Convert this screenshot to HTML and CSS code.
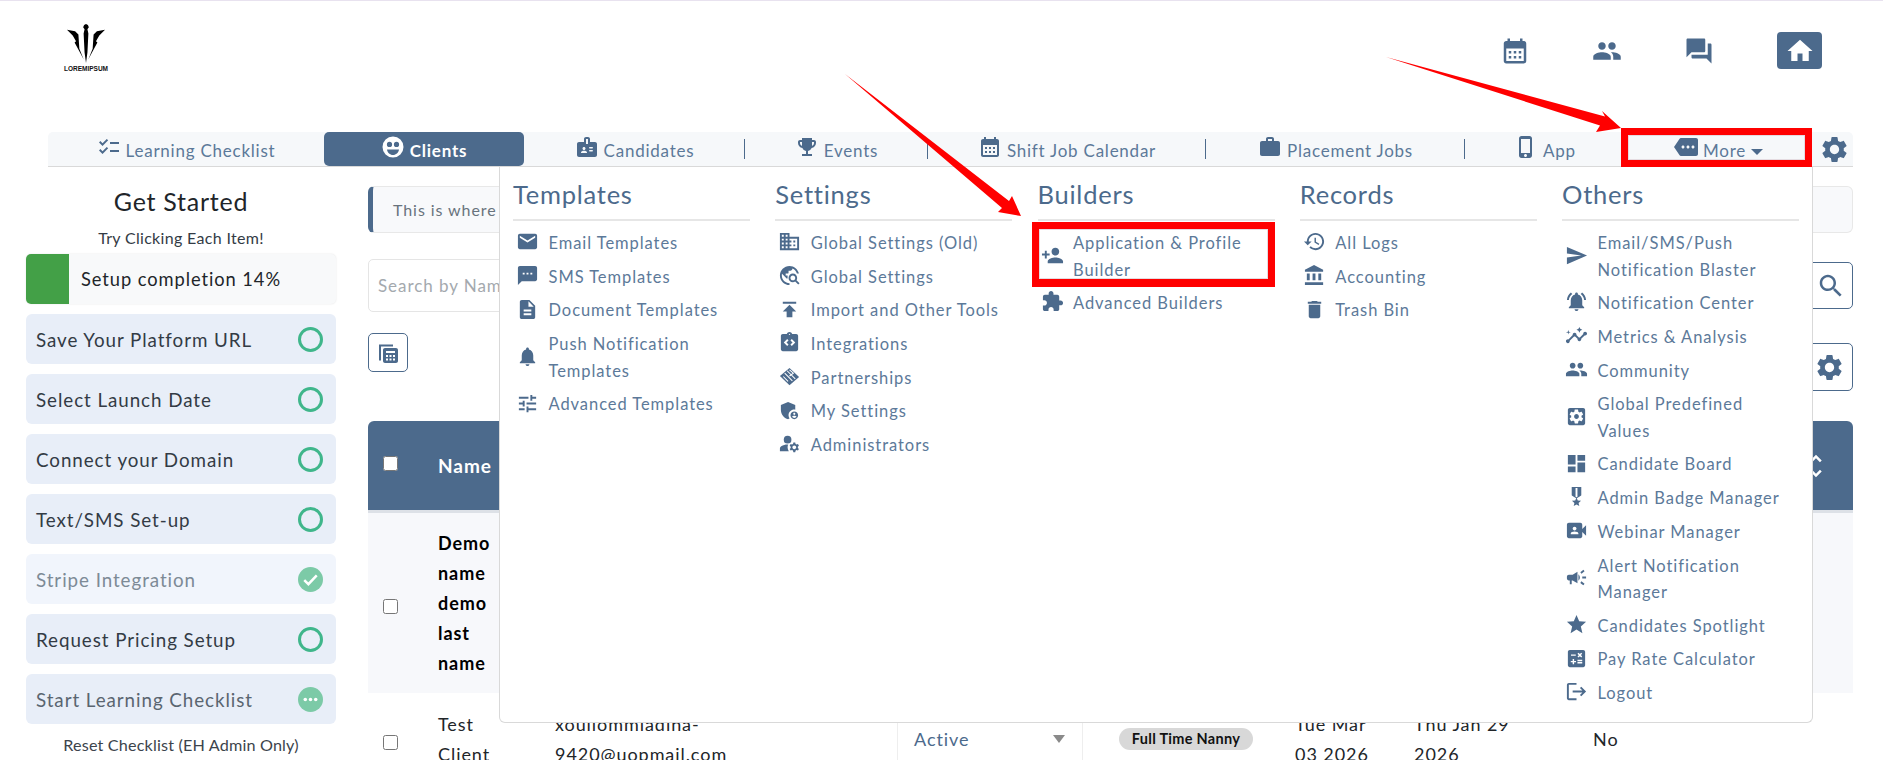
FILE: index.html
```html
<!DOCTYPE html>
<html lang="en">
<head>
<meta charset="utf-8">
<title>Clients</title>
<link rel="stylesheet" href="styles.css">
</head>
<body>
<svg class="sprite" width="0" height="0" aria-hidden="true">
<symbol id="i-checklist" viewBox="0 0 24 24"><path d="M22 7h-9v2h9V7zm0 8h-9v2h9v-2zM5.54 11 2 7.46l1.41-1.41 2.12 2.12 4.24-4.24 1.41 1.41L5.54 11zm0 8L2 15.46l1.41-1.41 2.12 2.12 4.24-4.24 1.41 1.41L5.54 19z"/></symbol>
<symbol id="i-face" viewBox="0 0 24 24"><path fill-rule="evenodd" d="M12 1.500a10.500 10.500 0 100 21 10.500 10.500 0 000-21zM8.500 6.800a2.600 2.600 0 110 5.200 2.600 2.600 0 010-5.200zm7 0a2.600 2.600 0 110 5.200 2.600 2.600 0 010-5.200zM12 20c-3 0-5.500-2.300-6-5.500h12c-.5 3.200-3 5.500-6 5.500z"/></symbol>
<symbol id="i-badge" viewBox="0 0 24 24"><path d="M20 7h-5V4c0-1.1-.9-2-2-2h-2c-1.1 0-2 .9-2 2v3H4c-1.1 0-2 .9-2 2v11c0 1.1.9 2 2 2h16c1.1 0 2-.9 2-2V9c0-1.1-.9-2-2-2zM9 12c.83 0 1.5.67 1.5 1.5S9.83 15 9 15s-1.5-.67-1.5-1.5S8.17 12 9 12zm3 6H6v-.43c0-.6.36-1.15.92-1.39.64-.28 1.34-.43 2.08-.43s1.44.15 2.08.43c.55.24.92.78.92 1.39V18zm1-9h-2V4h2v5zm4.25 7.5h-2.5c-.41 0-.75-.34-.75-.75s.34-.75.75-.75h2.5c.41 0 .75.34.75.75s-.34.75-.75.75zm0-3h-2.5c-.41 0-.75-.34-.75-.75s.34-.75.75-.75h2.5c.41 0 .75.34.75.75s-.34.75-.75.75z"/></symbol>
<symbol id="i-trophy" viewBox="0 0 24 24"><path d="M19 5h-2V3H7v2H5c-1.1 0-2 .9-2 2v1c0 2.55 1.92 4.63 4.39 4.94.63 1.5 1.98 2.63 3.61 2.96V19H7v2h10v-2h-4v-3.1c1.63-.33 2.98-1.46 3.61-2.96C19.08 12.63 21 10.55 21 8V7c0-1.1-.9-2-2-2zM5 8V7h2v3.82C5.84 10.4 5 9.3 5 8zm14 0c0 1.3-.84 2.4-2 2.82V7h2v1z"/></symbol>
<symbol id="i-calendar" viewBox="0 0 24 24"><path d="M19 4h-1V2h-2v2H8V2H6v2H5c-1.11 0-1.99.9-1.99 2L3 20c0 1.1.9 2 2 2h14c1.1 0 2-.9 2-2V6c0-1.1-.9-2-2-2zm0 16H5V10h14v10z"/><path d="M7 12h2v2H7zM11 12h2v2h-2zM15 12h2v2h-2zM7 16h2v2H7zM11 16h2v2h-2zM15 16h2v2h-2z"/></symbol>
<symbol id="i-work" viewBox="0 0 24 24"><path d="M20 6h-4V4c0-1.11-.89-2-2-2h-4c-1.11 0-2 .89-2 2v2H4c-1.11 0-1.99.89-1.99 2L2 19c0 1.11.89 2 2 2h16c1.11 0 2-.89 2-2V8c0-1.11-.89-2-2-2zm-6 0h-4V4h4v2z"/></symbol>
<symbol id="i-phone" viewBox="0 0 24 24"><path d="M15.5 1h-8C6.12 1 5 2.12 5 3.5v17C5 21.88 6.12 23 7.5 23h8c1.38 0 2.5-1.12 2.5-2.5v-17C18 2.12 16.88 1 15.5 1zm-4 21c-.83 0-1.5-.67-1.5-1.5s.67-1.5 1.5-1.5 1.5.67 1.5 1.5-.67 1.5-1.5 1.5zm4.5-4H7V4h9v14z"/></symbol>
<symbol id="i-more" viewBox="0 0 24 24"><path d="M22 3H7c-.69 0-1.23.35-1.59.88L0 12l5.41 8.11c.36.53.9.89 1.59.89h15c1.1 0 2-.9 2-2V5c0-1.1-.9-2-2-2zM9 13.5c-.83 0-1.5-.67-1.5-1.5s.67-1.5 1.5-1.5 1.5.67 1.5 1.5-.67 1.5-1.5 1.5zm5 0c-.83 0-1.5-.67-1.5-1.5s.67-1.5 1.5-1.5 1.5.67 1.5 1.5-.67 1.5-1.5 1.5zm5 0c-.83 0-1.5-.67-1.5-1.5s.67-1.5 1.5-1.5 1.5.67 1.5 1.5-.67 1.5-1.5 1.5z"/></symbol>
<symbol id="i-gear" viewBox="0 0 24 24"><path d="M19.14 12.94c.04-.3.06-.61.06-.94 0-.32-.02-.64-.07-.94l2.03-1.58c.18-.14.23-.41.12-.61l-1.92-3.32c-.12-.22-.37-.29-.59-.22l-2.39.96c-.5-.38-1.03-.7-1.62-.94l-.36-2.54c-.04-.24-.24-.41-.48-.41h-3.84c-.24 0-.43.17-.47.41l-.36 2.54c-.59.24-1.13.57-1.62.94l-2.39-.96c-.22-.08-.47 0-.59.22L2.74 8.87c-.12.21-.08.47.12.61l2.03 1.58c-.05.3-.09.63-.09.94s.02.64.07.94l-2.03 1.58c-.18.14-.23.41-.12.61l1.92 3.32c.12.22.37.29.59.22l2.39-.96c.5.38 1.03.7 1.62.94l.36 2.54c.05.24.24.41.48.41h3.84c.24 0 .44-.17.47-.41l.36-2.54c.59-.24 1.13-.56 1.62-.94l2.39.96c.22.08.47 0 .59-.22l1.92-3.32c.12-.22.07-.47-.12-.61l-2.01-1.58zM12 15.6c-1.98 0-3.6-1.62-3.6-3.6s1.62-3.6 3.6-3.6 3.6 1.62 3.6 3.6-1.62 3.6-3.6 3.6z"/></symbol>
<symbol id="i-people" viewBox="0 0 24 24"><path d="M16 11c1.66 0 2.99-1.34 2.99-3S17.66 5 16 5c-1.66 0-3 1.34-3 3s1.34 3 3 3zm-8 0c1.66 0 2.99-1.34 2.99-3S9.66 5 8 5C6.34 5 5 6.34 5 8s1.34 3 3 3zm0 2c-2.33 0-7 1.17-7 3.5V19h14v-2.5c0-2.33-4.67-3.5-7-3.5zm8 0c-.29 0-.62.02-.97.05 1.16.84 1.97 1.97 1.97 3.45V19h6v-2.5c0-2.33-4.67-3.5-7-3.5z"/></symbol>
<symbol id="i-forum" viewBox="0 0 24 24"><path d="M21 6h-2v9H6v2c0 .55.45 1 1 1h11l4 4V7c0-.55-.45-1-1-1zm-4 6V3c0-.55-.45-1-1-1H3c-.55 0-1 .45-1 1v14l4-4h10c.55 0 1-.45 1-1z"/></symbol>
<symbol id="i-home" viewBox="0 0 24 24"><path d="M10 20v-6h4v6h5v-8h3L12 3 2 12h3v8z"/></symbol>
<symbol id="i-email" viewBox="0 0 24 24"><path d="M20 4H4c-1.1 0-1.99.9-1.99 2L2 18c0 1.1.9 2 2 2h16c1.1 0 2-.9 2-2V6c0-1.1-.9-2-2-2zm0 4l-8 5-8-5V6l8 5 8-5v2z"/></symbol>
<symbol id="i-sms" viewBox="0 0 24 24"><path d="M20 2H4c-1.1 0-1.99.9-1.99 2L2 22l4-4h14c1.1 0 2-.9 2-2V4c0-1.1-.9-2-2-2zM9 11H7V9h2v2zm4 0h-2V9h2v2zm4 0h-2V9h2v2z"/></symbol>
<symbol id="i-doc" viewBox="0 0 24 24"><path d="M14 2H6c-1.1 0-1.99.9-1.99 2L4 20c0 1.1.89 2 1.99 2H18c1.1 0 2-.9 2-2V8l-6-6zm2 16H8v-2h8v2zm0-4H8v-2h8v2zm-3-5V3.5L18.5 9H13z"/></symbol>
<symbol id="i-bell" viewBox="0 0 24 24"><path d="M12 22c1.1 0 2-.9 2-2h-4c0 1.1.89 2 2 2zm6-6v-5c0-3.07-1.64-5.64-4.5-6.32V4c0-.83-.67-1.5-1.5-1.5s-1.5.67-1.5 1.5v.68C7.63 5.36 6 7.92 6 11v5l-2 2v1h16v-1l-2-2z"/></symbol>
<symbol id="i-tune" viewBox="0 0 24 24"><path d="M3 17v2h6v-2H3zM3 5v2h10V5H3zm10 16v-2h8v-2h-8v-2h-2v6h2zM7 9v2H3v2h4v2h2V9H7zm14 4v-2H11v2h10zm-6-4h2V7h4V5h-4V3h-2v6z"/></symbol>
<symbol id="i-domain" viewBox="0 0 24 24"><path d="M12 7V3H2v18h20V7H12zM6 19H4v-2h2v2zm0-4H4v-2h2v2zm0-4H4V9h2v2zm0-4H4V5h2v2zm4 12H8v-2h2v2zm0-4H8v-2h2v2zm0-4H8V9h2v2zm0-4H8V5h2v2zm10 12h-8v-2h2v-2h-2v-2h2v-2h-2V9h8v10zm-2-8h-2v2h2v-2zm0 4h-2v2h2v-2z"/></symbol>
<symbol id="i-explore" viewBox="0 0 24 24"><path d="M19.3 16.9c.4-.7.7-1.5.7-2.4 0-2.5-2-4.5-4.5-4.5S11 12 11 14.5s2 4.5 4.5 4.5c.9 0 1.7-.3 2.4-.7l3.2 3.2 1.4-1.4-3.2-3.2zm-3.8.1c-1.4 0-2.5-1.1-2.5-2.5s1.1-2.5 2.5-2.5 2.5 1.1 2.5 2.5-1.1 2.5-2.5 2.5zM12 20v2C6.48 22 2 17.52 2 12S6.48 2 12 2c4.84 0 8.87 3.44 9.8 8h-2.07c-.64-2.46-2.4-4.47-4.73-5.41V5c0 1.1-.9 2-2 2h-2v2c0 .55-.45 1-1 1H8v2h2v3H9l-4.79-4.79C4.08 10.79 4 11.38 4 12c0 4.41 3.59 8 8 8z"/></symbol>
<symbol id="i-publish" viewBox="0 0 24 24"><path d="M5 4v2h14V4H5zm0 10h4v6h6v-6h4l-7-7-7 7z"/></symbol>
<symbol id="i-integr" viewBox="0 0 24 24"><path d="M19 3h-4.18C14.4 1.84 13.3 1 12 1s-2.4.84-2.82 2H5c-1.1 0-2 .9-2 2v14c0 1.1.9 2 2 2h14c1.1 0 2-.9 2-2V5c0-1.1-.9-2-2-2zm-7-.25c.41 0 .75.34.75.75s-.34.75-.75.75-.75-.34-.75-.75.34-.75.75-.75zM11 14.17l-1.41 1.42L6 12l3.59-3.59L11 9.83 8.83 12 11 14.17zm3.41 1.42L13 14.17 15.17 12 13 9.83l1.41-1.42L18 12l-3.59 3.59z"/></symbol>
<symbol id="i-hands" viewBox="0 0 24 24"><path d="M12 3l10 9.5L12 21 2 11.5z"/><path d="M7 8.5l8 8M9.5 6l8.5 8.5M5.5 12l5 5M12 5l4 3.5-4 3" fill="none" stroke="#fff" stroke-width="1.1"/></symbol>
<symbol id="i-shield" viewBox="0 0 24 24"><path d="M17 11c.34 0 .67.04 1 .09V6.27L10.5 3 3 6.27v4.91c0 4.54 3.2 8.79 7.5 9.82.55-.13 1.08-.32 1.6-.55-.69-.98-1.1-2.17-1.1-3.45 0-3.31 2.69-6 6-6z"/><path fill-rule="evenodd" d="M17 13c-2.21 0-4 1.79-4 4s1.79 4 4 4 4-1.79 4-4-1.79-4-4-4zm0 1.38c.62 0 1.12.51 1.12 1.12s-.51 1.12-1.12 1.12-1.12-.51-1.12-1.12.5-1.12 1.12-1.12zm0 5.37c-.93 0-1.74-.46-2.24-1.17.05-.72 1.51-1.08 2.24-1.08s2.19.36 2.24 1.08c-.5.71-1.31 1.17-2.24 1.17z"/></symbol>
<symbol id="i-admin" viewBox="0 0 24 24"><path d="M10.67 13.02c-.22-.01-.44-.02-.67-.02-2.42 0-4.68.67-6.61 1.82-.88.52-1.39 1.5-1.39 2.53V20h9.26c-.79-1.13-1.26-2.51-1.26-4 0-1.07.25-2.07.67-2.98z"/><circle cx="10" cy="8" r="4"/><path fill-rule="evenodd" d="M20.75 16c0-.22-.03-.42-.06-.63l1.14-1.01-1-1.73-1.45.49c-.32-.27-.68-.48-1.08-.63L18 11h-2l-.3 1.49c-.4.15-.76.36-1.08.63l-1.45-.49-1 1.73 1.14 1.01c-.03.21-.06.41-.06.63s.03.42.06.63l-1.14 1.01 1 1.73 1.45-.49c.32.27.68.48 1.08.63L16 21h2l.3-1.49c.4-.15.76-.36 1.08-.63l1.45.49 1-1.73-1.14-1.01c.03-.21.06-.41.06-.63zM17 18c-1.1 0-2-.9-2-2s.9-2 2-2 2 .9 2 2-.9 2-2 2z"/></symbol>
<symbol id="i-personadd" viewBox="0 0 24 24"><path d="M15 12c2.21 0 4-1.79 4-4s-1.79-4-4-4-4 1.79-4 4 1.79 4 4 4zm-9-2V7H4v3H1v2h3v3h2v-3h3v-2H6zm9 4c-2.67 0-8 1.34-8 4v2h16v-2c0-2.66-5.33-4-8-4z"/></symbol>
<symbol id="i-puzzle" viewBox="0 0 24 24"><path d="M20.5 11H19V7c0-1.1-.9-2-2-2h-4V3.5C13 2.12 11.88 1 10.5 1S8 2.12 8 3.5V5H4c-1.1 0-1.99.9-1.99 2v3.8H3.5c1.49 0 2.7 1.21 2.7 2.7s-1.21 2.7-2.7 2.7H2V20c0 1.1.9 2 2 2h3.8v-1.5c0-1.49 1.21-2.7 2.7-2.7 1.49 0 2.7 1.21 2.7 2.7V22H17c1.1 0 2-.9 2-2v-4h1.5c1.38 0 2.5-1.12 2.5-2.5S21.88 11 20.5 11z"/></symbol>
<symbol id="i-history" viewBox="0 0 24 24"><path d="M13 3c-4.97 0-9 4.03-9 9H1l3.89 3.89.07.14L9 12H6c0-3.87 3.13-7 7-7s7 3.13 7 7-3.13 7-7 7c-1.93 0-3.68-.79-4.94-2.06l-1.42 1.42C8.27 19.99 10.51 21 13 21c4.97 0 9-4.03 9-9s-4.03-9-9-9zm-1 5v5l4.28 2.54.72-1.21-3.5-2.08V8H12z"/></symbol>
<symbol id="i-bank" viewBox="0 0 24 24"><path d="M4 10v7h3v-7H4zm6 0v7h3v-7h-3zM2 22h19v-3H2v3zm14-12v7h3v-7h-3zm-4.5-9L2 6v2h19V6l-9.5-5z"/></symbol>
<symbol id="i-trash" viewBox="0 0 24 24"><path d="M6 19c0 1.1.9 2 2 2h8c1.1 0 2-.9 2-2V7H6v12zM19 4h-3.5l-1-1h-5l-1 1H5v2h14V4z"/></symbol>
<symbol id="i-send" viewBox="0 0 24 24"><path d="M2.01 21L23 12 2.01 3 2 10l15 2-15 2z"/></symbol>
<symbol id="i-bellring" viewBox="0 0 24 24"><path d="M7.58 4.08L6.15 2.65C3.75 4.48 2.17 7.3 2.03 10.5h2c.15-2.65 1.51-4.97 3.55-6.42zm12.39 6.42h2c-.15-3.2-1.73-6.02-4.12-7.85l-1.42 1.43c2.02 1.45 3.39 3.77 3.54 6.42zM18 11c0-3.07-1.64-5.64-4.5-6.32V4c0-.83-.67-1.5-1.5-1.5s-1.5.67-1.5 1.5v.68C7.63 5.36 6 7.92 6 11v5l-2 2v1h16v-1l-2-2v-5zm-6 11c.14 0 .27-.01.4-.04.65-.14 1.18-.58 1.44-1.18.1-.24.15-.5.15-.78h-4c.01 1.1.9 2 2.01 2z"/></symbol>
<symbol id="i-insights" viewBox="0 0 24 24"><path d="M21 8c-1.45 0-2.26 1.44-1.93 2.51l-3.55 3.56c-.3-.09-.74-.09-1.04 0l-2.55-2.55C12.27 10.45 11.46 9 10 9c-1.45 0-2.27 1.44-1.93 2.52l-4.56 4.55C2.44 15.74 1 16.55 1 18c0 1.1.9 2 2 2 1.45 0 2.26-1.44 1.93-2.51l4.55-4.56c.3.09.74.09 1.04 0l2.55 2.55C12.73 16.55 13.54 18 15 18c1.45 0 2.27-1.44 1.93-2.52l3.56-3.55C21.56 12.26 23 11.45 23 10c0-1.1-.9-2-2-2z"/><path d="M15 9l.94-2.07L18 6l-2.06-.93L15 3l-.92 2.07L12 6l2.08.93zM3.5 11L4 9l2-.5L4 8l-.5-2L3 8l-2 .5L3 9z"/></symbol>
<symbol id="i-appgear" viewBox="0 0 24 24"><path fill-rule="evenodd" d="M19 3H5c-1.1 0-2 .9-2 2v14c0 1.1.9 2 2 2h14c1.1 0 2-.9 2-2V5c0-1.1-.9-2-2-2zm-1.75 9c0 .24-.02.47-.05.71l1.52 1.19c.14.11.18.3.09.46l-1.44 2.49c-.09.16-.28.22-.44.16l-1.79-.72c-.37.28-.78.52-1.21.71l-.27 1.9c-.03.17-.18.3-.36.3h-2.88c-.18 0-.33-.13-.36-.3l-.27-1.9c-.44-.18-.84-.43-1.21-.71l-1.79.72c-.16.06-.35 0-.44-.16l-1.44-2.49c-.09-.16-.05-.35.09-.46l1.52-1.19c-.03-.24-.05-.47-.05-.71s.02-.47.05-.71l-1.52-1.19c-.14-.11-.18-.3-.09-.46l1.44-2.49c.09-.16.28-.22.44-.16l1.79.72c.37-.28.78-.52 1.21-.71l.27-1.9c.03-.17.18-.3.36-.3h2.88c.18 0 .33.13.36.3l.27 1.9c.44.18.84.43 1.21.71l1.79-.72c.16-.06.35 0 .44.16l1.44 2.49c.09.16.05.35-.09.46l-1.52 1.19c.03.24.05.47.05.71zM12 9.5c-1.38 0-2.5 1.12-2.5 2.5s1.12 2.5 2.5 2.5 2.5-1.12 2.5-2.5-1.12-2.5-2.5-2.5z"/></symbol>
<symbol id="i-board" viewBox="0 0 24 24"><path d="M3 13h8V3H3v10zm0 8h8v-6H3v6zm10 0h8V11h-8v10zm0-18v6h8V3h-8z"/></symbol>
<symbol id="i-medal" viewBox="0 0 24 24"><path d="M17 10.43V2H7v8.43c0 .35.18.68.49.86l4.18 2.51-.99 2.34-3.41.29 2.59 2.24L9.07 22 12 20.23 14.93 22l-.78-3.33 2.59-2.24-3.41-.29-.99-2.34 4.18-2.51c.3-.18.48-.5.48-.86zm-4 1.8l-1 .6-1-.6V3h2v9.23z"/></symbol>
<symbol id="i-video" viewBox="0 0 24 24"><path d="M18 10.48V6c0-1.1-.9-2-2-2H4c-1.1 0-2 .9-2 2v12c0 1.1.9 2 2 2h12c1.1 0 2-.9 2-2v-4.48l4 3.98v-11l-4 3.98zM10 8c1.1 0 2 .9 2 2s-.9 2-2 2-2-.9-2-2 .9-2 2-2zm4 8H6v-.57c0-.81.48-1.53 1.22-1.85.85-.37 1.79-.58 2.78-.58.99 0 1.93.21 2.78.58.74.32 1.22 1.04 1.22 1.85V16z"/></symbol>
<symbol id="i-campaign" viewBox="0 0 24 24"><path d="M18 11v2h4v-2h-4zm-2 6.61c.96.71 2.21 1.65 3.2 2.39.4-.53.8-1.07 1.2-1.6-.99-.74-2.24-1.68-3.2-2.4-.4.54-.8 1.08-1.2 1.61zM20.4 5.6c-.4-.53-.8-1.07-1.2-1.6-.99.74-2.24 1.68-3.2 2.4.4.53.8 1.07 1.2 1.6.96-.72 2.21-1.65 3.2-2.4zM4 9c-1.1 0-2 .9-2 2v2c0 1.1.9 2 2 2h1v4h2v-4h1l5 3V6L8 9H4zm11.5 3c0-1.33-.58-2.53-1.5-3.35v6.69c.92-.81 1.5-2.01 1.5-3.34z"/></symbol>
<symbol id="i-star" viewBox="0 0 24 24"><path d="M12 17.27L18.18 21l-1.64-7.03L22 9.24l-7.19-.61L12 2 9.19 8.63 2 9.24l5.46 4.73L5.82 21z"/></symbol>
<symbol id="i-calc" viewBox="0 0 24 24"><path d="M19 3H5c-1.1 0-2 .9-2 2v14c0 1.1.9 2 2 2h14c1.1 0 2-.9 2-2V5c0-1.1-.9-2-2-2zm-5.97 4.06L14.09 6l1.41 1.41L16.91 6l1.06 1.06-1.41 1.41 1.41 1.41-1.06 1.06-1.41-1.4-1.41 1.41-1.06-1.06 1.41-1.41-1.41-1.42zM6.25 7.72h5v1.5h-5v-1.5zM11.5 16h-2v2H8v-2H6v-1.5h2v-2h1.5v2h2V16zm6.5 1.25h-5v-1.5h5v1.5zm0-2.5h-5v-1.5h5v1.5z"/></symbol>
<symbol id="i-logout" viewBox="0 0 24 24"><path d="M17 7l-1.41 1.41L18.17 11H8v2h10.17l-2.58 2.58L17 17l5-5zM4 5h8V3H4c-1.1 0-2 .9-2 2v14c0 1.1.9 2 2 2h8v-2H4V5z"/></symbol>
<symbol id="i-search" viewBox="0 0 24 24"><path d="M15.5 14h-.79l-.28-.27C15.41 12.59 16 11.11 16 9.5 16 5.91 13.09 3 9.5 3S3 5.91 3 9.5 5.91 16 9.5 16c1.61 0 3.09-.59 4.23-1.57l.27.28v.79l5 4.99L20.49 19l-4.99-5zm-6 0C7.01 14 5 11.99 5 9.5S7.01 5 9.5 5 14 7.01 14 9.5 11.99 14 9.5 14z"/></symbol>
<symbol id="i-stack" viewBox="0 0 24 24"><path d="M3 3.5h14v2H5v14H3z"/><path fill-rule="evenodd" d="M9 7h11c1.1 0 2 .9 2 2v11c0 1.1-.9 2-2 2H9c-1.1 0-2-.9-2-2V9c0-1.1.9-2 2-2zm1 3v2h9v-2zm0 4v2h2v-2zm3.500 0v2h2v-2zm3.500 0v2h2v-2zm-7 3.500v2h2v-2zm3.500 0v2h2v-2zm3.500 0v2h2v-2z"/></symbol>
<symbol id="i-sort" viewBox="0 0 24 24"><path d="M12 5.830L15.170 9l1.410-1.410L12 3 7.410 7.590 8.830 9 12 5.830zm0 12.340L8.830 15l-1.410 1.410L12 21l4.590-4.590L15.170 15 12 18.170z"/></symbol>
</svg>

<header class="topbar">
  <div class="logo">
    <svg class="logo-mark" viewBox="0 0 40 41"><path d="M18 1 20 0l2 1 1 2.500-1.500 2 1 4.500-1 20L20 41l-1.500-11-1-20 1-4.500-1.500-2z"/><path d="M0 6 8.500 7.500l3.500 3.500 1 15 4.500 11L8 19.500l1.500-1.500L6 12z"/><path d="M40 6 31.500 7.500 28 11l-1 15-4.500 11L32 19.500 30.500 18 34 12z"/></svg>
    <span class="logo-name">LOREMIPSUM</span>
  </div>
  <div class="quick">
    <svg class="quick-icon"><use href="#i-calendar"/></svg>
    <svg class="quick-icon"><use href="#i-people"/></svg>
    <svg class="quick-icon"><use href="#i-forum"/></svg>
    <span class="home-btn"><svg class="quick-icon"><use href="#i-home"/></svg></span>
  </div>
</header>

<nav class="tabs">
  <a class="tab"><svg class="tab-icon"><use href="#i-checklist"/></svg>Learning Checklist</a>
  <a class="tab active"><svg class="tab-icon"><use href="#i-face"/></svg>Clients</a>
  <a class="tab sep"><svg class="tab-icon"><use href="#i-badge"/></svg>Candidates</a>
  <a class="tab sep"><svg class="tab-icon"><use href="#i-trophy"/></svg>Events</a>
  <a class="tab sep"><svg class="tab-icon"><use href="#i-calendar"/></svg>Shift Job Calendar</a>
  <a class="tab sep"><svg class="tab-icon"><use href="#i-work"/></svg>Placement Jobs</a>
  <a class="tab nudge"><svg class="tab-icon"><use href="#i-phone"/></svg>App</a>
  <a class="tab nudge"><svg class="tab-icon"><use href="#i-more"/></svg>More<span class="caret"></span></a>
  <a class="tab nudge"><svg class="tab-gear"><use href="#i-gear"/></svg></a>
</nav>

<div class="page">
  <aside class="side">
    <h2 class="side-title">Get Started</h2>
    <p class="side-hint">Try Clicking Each Item!</p>
    <div class="progress"><span class="progress-fill"></span><span class="progress-text">Setup completion 14%</span></div>
    <div class="step"><span>Save Your Platform URL</span><i class="ring"></i></div>
    <div class="step"><span>Select Launch Date</span><i class="ring"></i></div>
    <div class="step"><span>Connect your Domain</span><i class="ring"></i></div>
    <div class="step"><span>Text/SMS Set-up</span><i class="ring"></i></div>
    <div class="step done"><span>Stripe Integration</span><i class="ring filled"><svg viewBox="0 0 24 24"><path d="M6 12.500l4 4 8-8.500" fill="none" stroke="#fff" stroke-width="2.400"/></svg></i></div>
    <div class="step"><span>Request Pricing Setup</span><i class="ring"></i></div>
    <div class="step current"><span>Start Learning Checklist</span><i class="ring filled"><svg viewBox="0 0 24 24"><circle cx="7" cy="12" r="1.700" fill="#fff"/><circle cx="12" cy="12" r="1.700" fill="#fff"/><circle cx="17" cy="12" r="1.700" fill="#fff"/></svg></i></div>
    <p class="side-reset">Reset Checklist (EH Admin Only)</p>
  </aside>

  <main class="content">
    <div class="notice">This is where</div>
    <div class="search-row">
      <div class="search-input">Search by Name</div>
      <span class="icon-btn search-btn"><svg><use href="#i-search"/></svg></span>
    </div>
    <div class="tool-row">
      <span class="icon-btn calc-btn"><svg><use href="#i-stack"/></svg></span>
      <span class="icon-btn gear-btn"><svg><use href="#i-gear"/></svg></span>
    </div>
    <table class="grid">
      <colgroup><col class="c1"><col class="c2"><col class="c3"><col class="c4"><col class="c5"><col class="c6"><col class="c7"><col class="c8"></colgroup>
      <thead>
        <tr><th><input type="checkbox" class="check head-check"></th><th>Name</th><th></th><th></th><th></th><th></th><th></th><th class="sort-cell"><svg class="sort"><use href="#i-sort"/></svg></th></tr>
      </thead>
      <tbody>
        <tr class="shade"><td><input type="checkbox" class="check"></td><td class="strong"><span class="name">Demo name demo last name</span></td><td></td><td></td><td></td><td></td><td></td><td></td></tr>
        <tr class="plain"><td><input type="checkbox" class="check"></td><td><span class="name">Test Client</span></td><td>xouiiommiadina-<br>9420@uopmail.com</td><td class="status"><span class="select">Active<i class="select-caret"></i></span></td><td><span class="pill">Full Time Nanny</span></td><td>Tue Mar<br>03 2026</td><td>Thu Jan 29<br>2026</td><td>No</td></tr>
      </tbody>
    </table>
  </main>
</div>

<section class="mega">
  <div class="mega-col">
    <h3>Templates</h3>
    <ul>
      <li><svg><use href="#i-email"/></svg><span>Email Templates</span></li>
      <li><svg><use href="#i-sms"/></svg><span>SMS Templates</span></li>
      <li><svg><use href="#i-doc"/></svg><span>Document Templates</span></li>
      <li><svg><use href="#i-bell"/></svg><span>Push Notification Templates</span></li>
      <li><svg><use href="#i-tune"/></svg><span>Advanced Templates</span></li>
    </ul>
  </div>
  <div class="mega-col">
    <h3>Settings</h3>
    <ul>
      <li><svg><use href="#i-domain"/></svg><span>Global Settings (Old)</span></li>
      <li><svg><use href="#i-explore"/></svg><span>Global Settings</span></li>
      <li><svg><use href="#i-publish"/></svg><span>Import and Other Tools</span></li>
      <li><svg><use href="#i-integr"/></svg><span>Integrations</span></li>
      <li><svg><use href="#i-hands"/></svg><span>Partnerships</span></li>
      <li><svg><use href="#i-shield"/></svg><span>My Settings</span></li>
      <li><svg><use href="#i-admin"/></svg><span>Administrators</span></li>
    </ul>
  </div>
  <div class="mega-col">
    <h3>Builders</h3>
    <ul>
      <li><svg><use href="#i-personadd"/></svg><span>Application &amp; Profile Builder</span></li>
      <li><svg><use href="#i-puzzle"/></svg><span>Advanced Builders</span></li>
    </ul>
  </div>
  <div class="mega-col">
    <h3>Records</h3>
    <ul>
      <li><svg><use href="#i-history"/></svg><span>All Logs</span></li>
      <li><svg><use href="#i-bank"/></svg><span>Accounting</span></li>
      <li><svg><use href="#i-trash"/></svg><span>Trash Bin</span></li>
    </ul>
  </div>
  <div class="mega-col">
    <h3>Others</h3>
    <ul>
      <li><svg><use href="#i-send"/></svg><span>Email/SMS/Push Notification Blaster</span></li>
      <li><svg><use href="#i-bellring"/></svg><span>Notification Center</span></li>
      <li><svg><use href="#i-insights"/></svg><span>Metrics &amp; Analysis</span></li>
      <li><svg><use href="#i-people"/></svg><span>Community</span></li>
      <li><svg><use href="#i-appgear"/></svg><span>Global Predefined Values</span></li>
      <li><svg><use href="#i-board"/></svg><span>Candidate Board</span></li>
      <li><svg><use href="#i-medal"/></svg><span>Admin Badge Manager</span></li>
      <li><svg><use href="#i-video"/></svg><span>Webinar Manager</span></li>
      <li><svg><use href="#i-campaign"/></svg><span>Alert Notification Manager</span></li>
      <li><svg><use href="#i-star"/></svg><span>Candidates Spotlight</span></li>
      <li><svg><use href="#i-calc"/></svg><span>Pay Rate Calculator</span></li>
      <li><svg><use href="#i-logout"/></svg><span>Logout</span></li>
    </ul>
  </div>
</section>

<svg class="arrows" viewBox="0 0 1883 760">
  <polygon points="845,74 1009,201 1012,196 1021,216 998,212 1002,208"/>
  <polygon points="1386,57 1605,116.500 1602,111 1621,128 1596,132 1600,125.500"/>
</svg>
<div class="mark mark-more"></div>
<div class="mark mark-app"></div>
</body>
</html>
```
FILE: styles.css
```css
* { box-sizing: border-box; }
html, body { height: 760px; overflow: hidden; }
body {
  margin: 0;
  position: relative;
  background: #fff;
  color: #212529;
  font-family: "Lato", "Open Sans", sans-serif;
  font-size: 17px;
  letter-spacing: 0.055em;
  border-top: 1px solid #e8e2ef;
}
svg { fill: currentColor; }
.sprite { display: block; height: 0; }

.topbar { display: flex; justify-content: space-between; height: 131px; padding: 22px 61px 0 64px; }
.logo { display: flex; flex-direction: column; align-items: center; width: 44px; }
.logo-mark { width: 38px; height: 41px; color: #000; }
.logo-name { font: 700 6.500px/9px "Liberation Sans", sans-serif; letter-spacing: 0; color: #111; white-space: nowrap; }
.quick { display: flex; align-items: center; gap: 62px; height: 37px; margin-top: 9px; color: #4c6a8c; }
.quick-icon { width: 30px; height: 30px; display: block; }
.home-btn { display: flex; align-items: center; justify-content: center; width: 45px; height: 37px; background: #4c6a8c; color: #fff; border-radius: 4px; margin-left: 1px; }

.tabs {
  display: grid;
  grid-template-columns: 276px 200px 221px 183px 278px 259px 156px 191px 41px;
  height: 35px;
  margin-left: 48px;
  width: 1805px;
  background: #f6f8fa;
  border-bottom: 1px solid #d9d9d9;
  border-radius: 5px 5px 0 0;
  color: #5c7999;
}
.tab { display: flex; align-items: center; justify-content: center; gap: 5px; font-size: 17px; letter-spacing: 0.045em; padding-top: 3px; height: 34px; }
.tab.sep { background: linear-gradient(#4c6a8c, #4c6a8c) right center / 1px 20px no-repeat; }
.tab.nudge { padding-left: 4px; }
.tab.active { background: #4c6a8c; color: #fff; border-radius: 5px; font-weight: 700; }
.tab-icon { width: 24px; height: 24px; margin-top: -8px; color: #4c6a8c; }
.tab.active .tab-icon { color: #fff; }
.tab-gear { width: 31px; height: 31px; margin-top: -3px; color: #4c6a8c; }
.caret { width: 0; height: 0; border: 6px solid transparent; border-top-color: #4c6a8c; border-bottom: 0; margin-top: 3px; }

.page { display: flex; padding-left: 26px; }
.side { width: 310px; flex: none; }
.side-title { margin: 16px 0 0; font-size: 25px; line-height: 36px; font-weight: 400; text-align: center; letter-spacing: 0.03em; }
.side-hint { margin: 8px 0 5px; font-size: 16px; line-height: 22px; text-align: center; letter-spacing: 0.02em; color: #333b45; }
.progress { display: flex; align-items: center; height: 50px; background: #f8f9fa; border-radius: 5px; box-shadow: 0 0 2px #e2e2e2; margin-bottom: 10px; overflow: hidden; }
.progress-fill { width: 43px; height: 100%; background: #43a047; }
.progress-text { margin-left: 12px; font-size: 18.300px; }
.step { display: flex; align-items: center; justify-content: space-between; height: 50px; margin-bottom: 10px; padding: 0 13px 0 10px; background: #e8eef8; border-radius: 6px; font-size: 18.800px; color: #333b45; }
.step.done { background: #f1f5fc; color: #7d8a96; }
.step.current { color: #5a6570; }
.ring { display: block; width: 25px; height: 25px; border: 3px solid #3fb68b; border-radius: 50%; }
.ring.filled { background: #7ccaa7; border: 0; }
.ring svg { display: block; width: 25px; height: 25px; }
.side-reset { margin: 0; font-size: 16.200px; line-height: 22px; text-align: center; letter-spacing: 0.01em; color: #3c444c; }

.content { width: 1485px; margin-left: 32px; }
.notice { height: 47px; margin-top: 19px; padding: 0 0 0 20px; display: flex; align-items: center; background: #f8f9fb; border: 1px solid #e8e8e8; border-left: 5px solid #4c6a8c; border-radius: 6px; color: #68737d; font-size: 16px; }
.search-row { display: flex; align-items: center; margin-top: 26px; gap: 8px; }
.search-input { flex: 1; height: 53px; padding-left: 9px; display: flex; align-items: center; border: 1px solid #e5e5e5; border-radius: 5px; color: #a4a9ae; font-size: 17px; }
.icon-btn { display: flex; align-items: center; justify-content: center; border: 1px solid #4c6a8c; border-radius: 5px; color: #4c6a8c; }
.search-btn { width: 60px; height: 47px; }
.search-btn svg { width: 30px; height: 30px; margin-left: 16px; }
.tool-row { display: flex; justify-content: space-between; height: 58px; margin-top: 21px; }
.calc-btn { width: 40px; height: 39px; }
.calc-btn svg { width: 24px; height: 24px; }
.gear-btn { width: 60px; height: 48px; align-self: flex-end; }
.gear-btn svg { width: 31px; height: 31px; margin-left: 12px; }

.grid { width: 1485px; table-layout: fixed; border-collapse: separate; border-spacing: 0; margin-top: 30px; }
.c1 { width: 70px; } .c2 { width: 117px; } .c3 { width: 342px; } .c4 { width: 186px; }
.c5 { width: 212px; } .c6 { width: 119px; } .c7 { width: 179px; } .c8 { width: 260px; }
.grid th { height: 92px; background: #4c6a8c; color: #fff; font-size: 19px; font-weight: 700; text-align: left; padding: 0; border-bottom: 3px solid #dde1e7; overflow: hidden; white-space: nowrap; vertical-align: middle; }
.grid th:first-child { border-top-left-radius: 6px; padding-left: 15px; }
.grid th:last-child { border-top-right-radius: 6px; }
.sort-cell { padding-left: 208px !important; }
.sort { display: block; width: 30px; height: 30px; color: #fff; }
.check { display: block; width: 15px; height: 15px; margin: 6px 0 0; }
.head-check { margin: 0 0 5px; }
.grid td { padding: 15px 0; font-size: 18px; line-height: 30px; vertical-align: middle; }
.grid td:first-child { padding-left: 15px; }
.plain td { padding: 16px 0 14px; }
.shade td { background: #f7f8fb; }
.name { display: block; width: min-content; }
.strong { font-weight: 700; color: #000; }
.status { border-left: 1px solid #eee; border-right: 1px solid #eee; color: #4c6a8c; }
.select { display: flex; align-items: center; justify-content: space-between; padding: 0 17px 0 16px; }
.select-caret { width: 0; height: 0; border: 6px solid transparent; border-top: 8px solid #8a8a8a; border-bottom: 0; }
.pill { display: block; width: 134px; height: 22px; margin-left: 36px; background: #d8d8d8; border-radius: 11px; font-size: 14.500px; line-height: 22px; font-weight: 700; text-align: center; color: #111; letter-spacing: 0.02em; white-space: nowrap; }

.mega { position: absolute; left: 499px; top: 166px; width: 1314px; height: 556px; display: grid; grid-template-columns: repeat(5, 237px); column-gap: 25.250px; padding: 0 0 0 13px; background: #fff; border: 1px solid #d9d9d9; border-top: 0; border-radius: 0 0 6px 6px; color: #4c6a8c; }
.mega-col h3 { margin: 0; padding: 10px 0 8px; height: 54px; font-size: 25.500px; line-height: 34px; font-weight: 400; border-bottom: 2px solid #e6e6e6; letter-spacing: 0.03em; }
.mega-col ul { list-style: none; margin: 9px 0 0; padding: 0; display: flex; flex-direction: column; gap: 7.200px; }
.mega-col li { display: flex; align-items: center; gap: 9.500px; padding-left: 3px; line-height: 26.500px; font-size: 16.500px; color: #5c7999; }
.mega-col li svg { flex: none; width: 23px; height: 23px; margin-top: -3px; color: #4c6a8c; }

.arrows { position: absolute; left: 0; top: -1px; width: 1883px; height: 760px; fill: #f00; pointer-events: none; }
.mark { position: absolute; border: 7px solid #f00; box-shadow: inset 0 0 0 1px #e4dbe0; pointer-events: none; }
.mark-more { left: 1621px; top: 127px; width: 191px; height: 39px; }
.mark-app { left: 1032px; top: 221px; width: 243px; height: 65px; border-bottom-width: 8px; }
```
